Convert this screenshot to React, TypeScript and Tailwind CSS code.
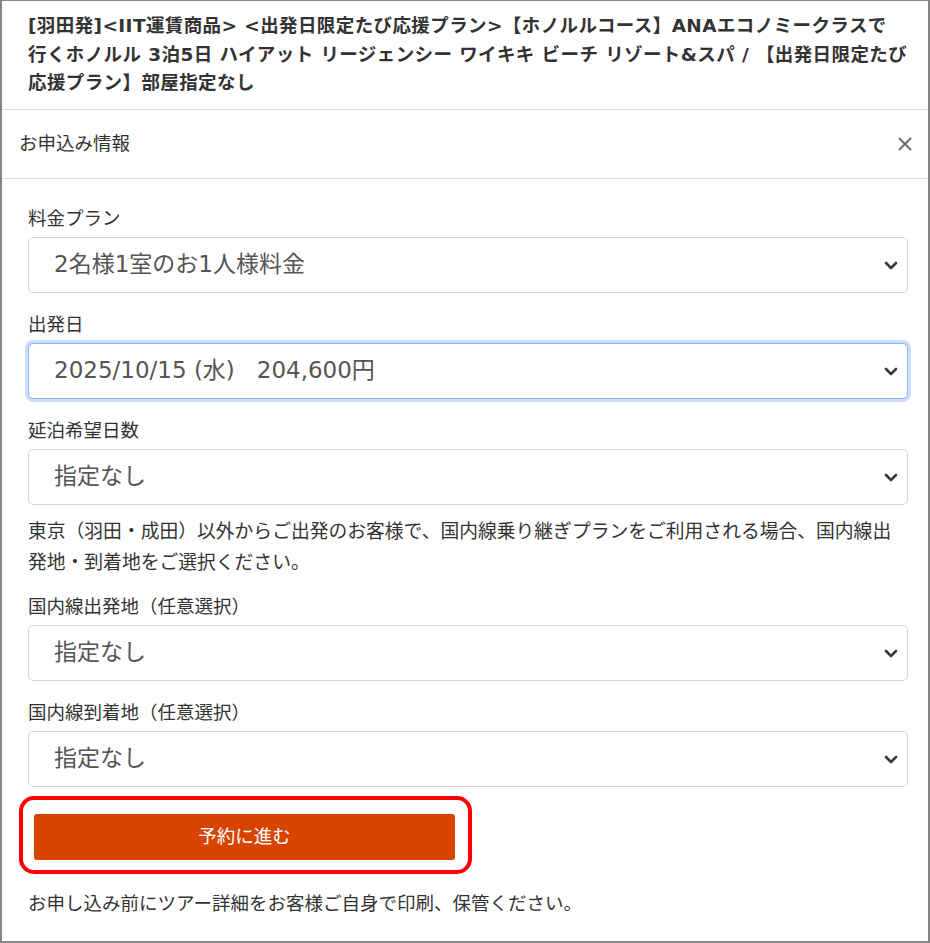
const FONT = "font-['DejaVu_Sans','Noto_Sans_CJK_JP',sans-serif]";

function Chevron() {
  return (
    <svg
      viewBox="0 0 16 16"
      className="absolute right-[8px] top-1/2 h-[16px] w-[16px] -translate-y-1/2"
      fill="none"
      stroke="#343a40"
      strokeWidth={2.6}
      strokeLinecap="round"
      strokeLinejoin="round"
    >
      <path d="m3 6 5 5 5-5" />
    </svg>
  );
}

interface SelectBoxProps {
  value: string;
  focused?: boolean;
}

function SelectBox({ value, focused = false }: SelectBoxProps) {
  return (
    <div
      className={
        focused
          ? "relative flex h-[56px] items-center rounded-[5px] border border-[#86b7fe] bg-white pl-[25px] shadow-[0_0_0_3px_rgba(13,110,253,0.22)]"
          : "relative flex h-[56px] items-center rounded-[5px] border border-[#d3d3d3] bg-white pl-[25px]"
      }
    >
      <span className="whitespace-pre text-[23px] leading-none text-[#555]">
        {value}
      </span>
      <Chevron />
    </div>
  );
}

function Field({
  label,
  value,
  focused,
}: {
  label: string;
  value: string;
  focused?: boolean;
}) {
  return (
    <div>
      <div className="mb-[4px] text-[18.5px] leading-[28px] text-[#333]">
        {label}
      </div>
      <SelectBox value={value} focused={focused} />
    </div>
  );
}

export default function App() {
  return (
    <div
      className={`${FONT} box-border h-[943px] w-[930px] overflow-hidden border-2 border-t border-[#858585] bg-white`}
    >
      {/* tour title */}
      <div className="pb-[11px] pl-[26px] pr-[6px] pt-[11px] text-[18.5px] font-bold leading-[28.5px] tracking-[0.4px] text-[#333]">
        [羽田発]&lt;IIT運賃商品&gt; &lt;出発日限定たび応援プラン&gt;【ホノルルコース】ANAエコノミークラスで
        <br />
        行くホノルル 3泊5日 ハイアット リージェンシー ワイキキ ビーチ リゾート&amp;スパ / 【出発日限定たび
        <br />
        応援プラン】部屋指定なし
      </div>

      <div className="flex h-[70px] items-center justify-between border-y border-[#dcdcdc] pl-[17px] pr-[16px]">
        <span className="text-[18.5px] text-[#333]">お申込み情報</span>
        <svg
          viewBox="0 0 14 14"
          className="h-[14px] w-[14px]"
          stroke="#6f6f6f"
          strokeWidth={2}
          strokeLinecap="round"
        >
          <path d="M1.5 1.5 12.5 12.5M12.5 1.5 1.5 12.5" />
        </svg>
      </div>

      <div className="flex flex-col pl-[26px] pr-[20px] pt-[26px]">
        <div className="flex flex-col gap-[18px]">
          <Field label="料金プラン" value="2名様1室のお1人様料金" />
          <Field label="出発日" value="2025/10/15 (水)   204,600円" focused />
          <Field label="延泊希望日数" value="指定なし" />
        </div>

        <p className="mt-[11px] text-[18.8px] leading-[31px] text-[#333]">
          東京（羽田・成田）以外からご出発のお客様で、国内線乗り継ぎプランをご利用される場合、国内線出
          <br />
          発地・到着地をご選択ください。
        </p>

        <div className="mt-[15px] flex flex-col gap-[18px]">
          <Field label="国内線出発地（任意選択）" value="指定なし" />
          <Field label="国内線到着地（任意選択）" value="指定なし" />
        </div>

        <div className="-ml-[9px] mt-[9px] w-[453px] rounded-[15px] border-[4px] border-[#f00] pb-[10px] pl-[11px] pr-[13px] pt-[14px]">
          <button className="flex h-[46px] w-full items-center justify-center rounded-[3px] bg-[#d84400] text-[18.5px] text-white">
            予約に進む
          </button>
        </div>

        <p className="mt-[16px] text-[18.5px] leading-[28px] text-[#333]">
          お申し込み前にツアー詳細をお客様ご自身で印刷、保管ください。
        </p>
      </div>
    </div>
  );
}
